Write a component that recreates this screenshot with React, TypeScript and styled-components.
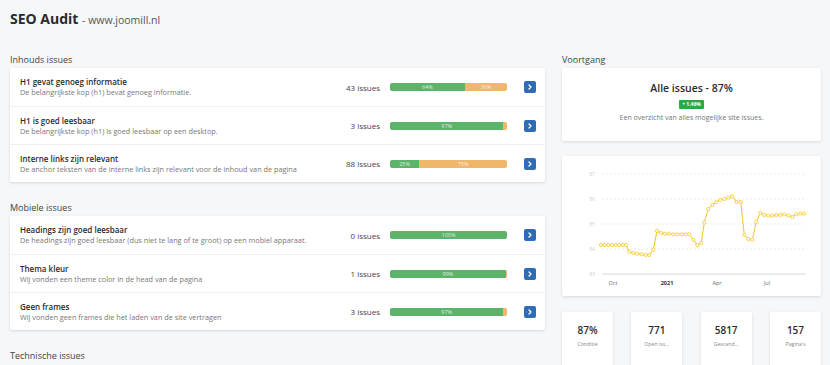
import React from 'react'
import styled, { createGlobalStyle } from 'styled-components'

const GlobalStyle = createGlobalStyle`
    body {
        margin: 0;
        background: #f5f7f9;
        font-family: "Open Sans", "Liberation Sans", sans-serif;
        color: #333;
    }
`

const Page = styled.div`
    width: 830px;
    height: 365px;
    overflow: hidden;
    padding: 10px 9px 0 10px;
    box-sizing: border-box;
`

const Title = styled.h1`
    margin: 0;
    font-size: 14px;
    line-height: 18px;
    font-weight: 700;
    color: #2b2b2b;

    span {
        font-size: 10.5px;
        font-weight: 400;
        color: #555;
    }
`

const Columns = styled.div`
    display: grid;
    grid-template-columns: 535px 259px;
    column-gap: 17px;
    margin-top: 25px;
    align-items: start;
`

const Column = styled.div`
    display: flex;
    flex-direction: column;
`

const SectionLabel = styled.div<{ $spaced?: boolean }>`
    font-size: 9px;
    line-height: 12px;
    color: #444;
    margin-top: ${(p) => (p.$spaced ? '20px' : '0')};
    margin-bottom: 2px;
`

const Card = styled.div`
    background: #fff;
    border-radius: 2px;
    box-shadow: 0 1px 3px rgba(0, 0, 0, 0.13);
`

const Row = styled.div`
    display: flex;
    align-items: center;
    height: 38px;
    box-sizing: border-box;
    padding: 0 9px 0 10px;
    border-top: 1px solid #eef0f2;

    &:first-child {
        border-top: none;
    }
`

const RowText = styled.div`
    flex: 1;
    min-width: 0;
`

const RowTitle = styled.div`
    font-size: 8px;
    font-weight: 600;
    line-height: 11px;
    color: #2b2b2b;
`

const RowDesc = styled.div`
    font-size: 7.3px;
    line-height: 11px;
    color: #777;
    white-space: nowrap;
`

const Count = styled.div`
    width: 60px;
    text-align: right;
    font-size: 8px;
    color: #444;
    margin-right: 10px;
`

const Bar = styled.div`
    display: flex;
    width: 117px;
    height: 8px;
    border-radius: 2px;
    overflow: hidden;
    margin-right: 17px;
`

const Segment = styled.div<{ $tone: 'good' | 'bad' }>`
    background: ${(p) => (p.$tone === 'good' ? '#5cb36a' : '#f0b66a')};
    color: rgba(255, 255, 255, 0.8);
    font-size: 5.5px;
    line-height: 8px;
    text-align: center;
    overflow: hidden;
`

const GoButton = styled.div`
    width: 12px;
    height: 12px;
    border-radius: 2px;
    background: #2e6db4;
    display: flex;
    align-items: center;
    justify-content: center;
`

const SummaryCard = styled(Card)`
    height: 73px;
    display: flex;
    flex-direction: column;
    align-items: center;
    padding-top: 13px;
    box-sizing: border-box;
`

const SummaryTitle = styled.div`
    font-size: 10.5px;
    font-weight: 600;
    line-height: 15px;
    color: #2b2b2b;
`

const Badge = styled.div`
    margin-top: 4px;
    background: #2ea745;
    color: #fff;
    font-size: 5px;
    font-weight: 700;
    line-height: 9px;
    padding: 0 3px;
    border-radius: 1px;
`

const SummaryText = styled.div`
    margin-top: 4px;
    font-size: 7px;
    color: #777;
`

const ChartCard = styled(Card)`
    margin-top: 15px;
    height: 140px;

    svg {
        display: block;
    }
`

const Stats = styled.div`
    margin-top: 16px;
    display: grid;
    grid-template-columns: repeat(4, 51px);
    justify-content: space-between;
`

const StatCard = styled(Card)`
    height: 60px;
    display: flex;
    flex-direction: column;
    align-items: center;
    padding-top: 11px;
    box-sizing: border-box;
`

const StatValue = styled.div`
    font-size: 10px;
    font-weight: 600;
    line-height: 14px;
    color: #2b2b2b;
`

const StatLabel = styled.div`
    margin-top: 3px;
    font-size: 5.2px;
    color: #888;
`

type Issue = { title: string; desc: string; count: number; good: number }

const inhoud: Issue[] = [
    { title: 'H1 gevat genoeg informatie', desc: 'De belangrijkste kop (h1) bevat genoeg informatie.', count: 43, good: 64 },
    { title: 'H1 is goed leesbaar', desc: 'De belangrijkste kop (h1) is goed leesbaar op een desktop.', count: 3, good: 97 },
    { title: 'Interne links zijn relevant', desc: 'De anchor teksten van de interne links zijn relevant voor de inhoud van de pagina', count: 88, good: 25 },
]

const mobiel: Issue[] = [
    { title: 'Headings zijn goed leesbaar', desc: 'De headings zijn goed leesbaar (dus niet te lang of te groot) op een mobiel apparaat.', count: 0, good: 100 },
    { title: 'Thema kleur', desc: 'Wij vonden een theme color in de head van de pagina', count: 1, good: 99 },
    { title: 'Geen frames', desc: 'Wij vonden geen frames die het laden van de site vertragen', count: 3, good: 97 },
]

const points: [number, number][] = [
    [39, 89], [42.7, 89], [46.3, 89], [50, 89], [53.7, 89], [57.3, 89], [61, 89], [64, 89],
    [67.3, 95.7], [71.3, 97], [75.3, 97.7], [79.7, 98.3], [83.7, 99], [87.3, 99], [91.3, 93.7],
    [95, 75], [99, 77], [103, 77.7], [107, 77.7], [111.3, 78.3], [115.3, 78.3], [119.7, 78.3],
    [123.7, 78.3], [127.3, 78.3], [131.3, 83.7], [135.3, 89], [139.3, 87], [142.3, 66.3],
    [146.3, 53], [150.3, 49], [154.3, 46], [158.3, 44], [162.3, 43], [166.3, 41.7], [170.3, 40.3],
    [174.7, 46], [178.7, 46], [182.3, 79], [186.3, 83], [190.3, 83.7], [194.3, 65.7], [198.3, 57],
    [202.3, 59], [206.3, 59.7], [210.3, 59.7], [214.3, 59], [218.3, 59], [222.3, 58.3],
    [226.3, 59.7], [230.3, 61], [234.3, 58.3], [238.3, 57.7], [242, 57.7],
]

const Chevron = () => (
    <svg width="6" height="6" viewBox="0 0 6 6">
        <polyline points="2,1 4,3 2,5" fill="none" stroke="#fff" strokeWidth="1.3" strokeLinecap="round" strokeLinejoin="round" />
    </svg>
)

const IssueRow = ({ issue }: { issue: Issue }) => {
    const bad = 100 - issue.good
    return (
        <Row>
            <RowText>
                <RowTitle>{issue.title}</RowTitle>
                <RowDesc>{issue.desc}</RowDesc>
            </RowText>
            <Count>{issue.count} issues</Count>
            <Bar>
                <Segment $tone="good" style={{ width: `${issue.good}%` }}>{issue.good}%</Segment>
                {bad > 0 && (
                    <Segment $tone="bad" style={{ width: `${bad}%` }}>{bad > 5 ? `${bad}%` : ''}</Segment>
                )}
            </Bar>
            <GoButton>
                <Chevron />
            </GoButton>
        </Row>
    )
}

const ProgressChart = () => {
    const grid = [
        { y: 18, label: '87' },
        { y: 43, label: '86' },
        { y: 68, label: '85' },
        { y: 93, label: '84' },
    ]
    const months = [
        { x: 51, label: 'Oct' },
        { x: 105, label: '2021', bold: true },
        { x: 155, label: 'Apr' },
        { x: 205, label: 'Jul' },
    ]
    return (
        <svg width="259" height="140" viewBox="0 0 259 140" fontFamily="Open Sans, sans-serif">
            {grid.map((g) => (
                <g key={g.label}>
                    <line x1="40" x2="244" y1={g.y} y2={g.y} stroke="#e6e6e6" strokeWidth="0.8" strokeDasharray="2 2" />
                    <text x="30" y={g.y + 1.8} fontSize="5" fill="#cfcfcf" textAnchor="middle">{g.label}</text>
                </g>
            ))}
            <line x1="40" x2="244" y1="118" y2="118" stroke="#cfcfcf" strokeWidth="0.8" />
            <text x="30" y="119.8" fontSize="5" fill="#cfcfcf" textAnchor="middle">83</text>
            {months.map((m) => (
                <text key={m.label} x={m.x} y="128.5" fontSize="5.5" fill={m.bold ? '#333' : '#666'} fontWeight={m.bold ? 700 : 400} textAnchor="middle">
                    {m.label}
                </text>
            ))}
            <polyline points={points.map((p) => p.join(',')).join(' ')} fill="none" stroke="#f6c623" strokeWidth="1" />
            {points.map(([x, y], i) => (
                <circle key={i} cx={x} cy={y} r="1.6" fill="#fff" stroke="#f6c623" strokeWidth="0.8" />
            ))}
        </svg>
    )
}

const stats = [
    { value: '87%', label: 'Conditie' },
    { value: '771', label: 'Open iss...' },
    { value: '5817', label: 'Gescand...' },
    { value: '157', label: "Pagina's" },
]

export default function App() {
    return (
        <Page>
            <GlobalStyle />
            <Title>
                SEO Audit <span>- www.joomill.nl</span>
            </Title>
            <Columns>
                <Column>
                    <SectionLabel>Inhouds issues</SectionLabel>
                    <Card>
                        {inhoud.map((i) => (
                            <IssueRow key={i.title} issue={i} />
                        ))}
                    </Card>
                    <SectionLabel $spaced>Mobiele issues</SectionLabel>
                    <Card>
                        {mobiel.map((i) => (
                            <IssueRow key={i.title} issue={i} />
                        ))}
                    </Card>
                    <SectionLabel $spaced>Technische issues</SectionLabel>
                </Column>
                <Column>
                    <SectionLabel>Voortgang</SectionLabel>
                    <SummaryCard>
                        <SummaryTitle>Alle issues - 87%</SummaryTitle>
                        <Badge>+ 1.46%</Badge>
                        <SummaryText>Een overzicht van alles mogelijke site issues.</SummaryText>
                    </SummaryCard>
                    <ChartCard>
                        <ProgressChart />
                    </ChartCard>
                    <Stats>
                        {stats.map((s) => (
                            <StatCard key={s.label}>
                                <StatValue>{s.value}</StatValue>
                                <StatLabel>{s.label}</StatLabel>
                            </StatCard>
                        ))}
                    </Stats>
                </Column>
            </Columns>
        </Page>
    )
}
